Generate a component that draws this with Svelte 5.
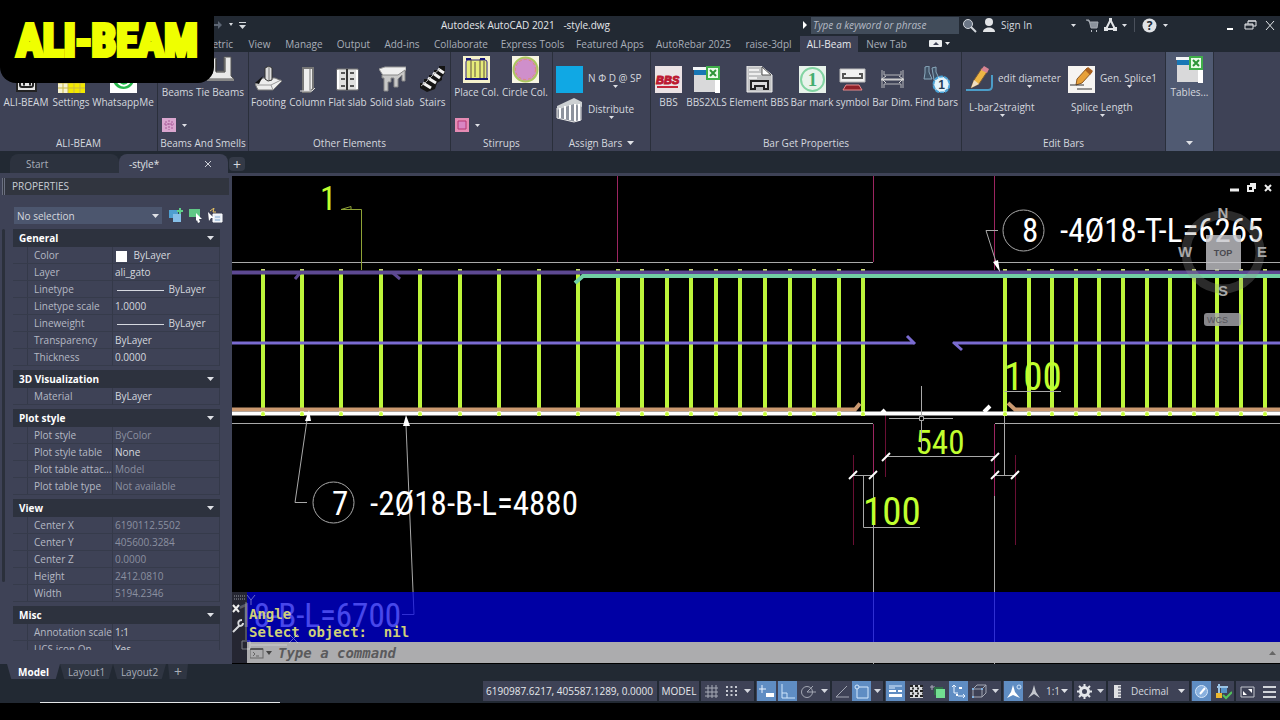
<script lang="ts">
    type Tool = { icon: string; label: string };

    const ribbonTabs = [
        'Parametric', 'View', 'Manage', 'Output', 'Add-ins', 'Collaborate', 'Express Tools',
        'Featured Apps', 'AutoRebar 2025', 'raise-3dpl', 'ALI-Beam', 'New Tab'
    ];
    let activeTab = $state('ALI-Beam');
    let command = $state('');
    let search = $state('');

    const aliTools: Tool[] = [
        { icon: 'section', label: 'ALI-BEAM' },
        { icon: 'sheet', label: 'Settings' },
        { icon: 'phone', label: 'WhatsappMe' }
    ];
    const beamTools: Tool[] = [
        { icon: 'tie', label: 'Beams' },
        { icon: 'tie', label: 'Tie Beams' }
    ];
    const elementTools: Tool[] = [
        { icon: 'footing', label: 'Footing' },
        { icon: 'column', label: 'Column' },
        { icon: 'flat', label: 'Flat slab' },
        { icon: 'solid', label: 'Solid slab' },
        { icon: 'stairs', label: 'Stairs' }
    ];
    const stirrupTools: Tool[] = [
        { icon: 'place', label: 'Place Col.' },
        { icon: 'circle', label: 'Circle Col.' }
    ];
    const barTools: Tool[] = [
        { icon: 'bbs', label: 'BBS' },
        { icon: 'xls', label: 'BBS2XLS' },
        { icon: 'element', label: 'Element BBS' },
        { icon: 'mark', label: 'Bar mark' },
        { icon: 'symbol', label: 'symbol' },
        { icon: 'dim', label: 'Bar Dim.' },
        { icon: 'find', label: 'Find bars' }
    ];

    const sections = [
        {
            title: 'General',
            rows: [
                { name: 'Color', value: 'ByLayer', swatch: true },
                { name: 'Layer', value: 'ali_gato' },
                { name: 'Linetype', value: 'ByLayer', line: true },
                { name: 'Linetype scale', value: '1.0000' },
                { name: 'Lineweight', value: 'ByLayer', line: true },
                { name: 'Transparency', value: 'ByLayer' },
                { name: 'Thickness', value: '0.0000' }
            ]
        },
        { title: '3D Visualization', rows: [{ name: 'Material', value: 'ByLayer' }] },
        {
            title: 'Plot style',
            rows: [
                { name: 'Plot style', value: 'ByColor', dim: true },
                { name: 'Plot style table', value: 'None' },
                { name: 'Plot table attac...', value: 'Model', dim: true },
                { name: 'Plot table type', value: 'Not available', dim: true }
            ]
        },
        {
            title: 'View',
            rows: [
                { name: 'Center X', value: '6190112.5502', dim: true },
                { name: 'Center Y', value: '405600.3284', dim: true },
                { name: 'Center Z', value: '0.0000', dim: true },
                { name: 'Height', value: '2412.0810', dim: true },
                { name: 'Width', value: '5194.2346', dim: true }
            ]
        },
        {
            title: 'Misc',
            rows: [
                { name: 'Annotation scale', value: '1:1' },
                { name: 'UCS icon On', value: 'Yes' }
            ]
        }
    ] as { title: string; rows: { name: string; value: string; swatch?: boolean; line?: boolean; dim?: boolean }[] }[];

    // stirrup positions along the beam
    const stirrups = [
        ...Array.from({ length: 10 }, (_, i) => Math.round(262.5 + i * 39.45)),
        ...Array.from({ length: 10 }, (_, i) => Math.round(642 + i * 24.6)),
        ...Array.from({ length: 12 }, (_, i) => Math.round(1005 + i * 23.6))
    ];
    const dimTicks = [[886, 457], [995, 457], [853, 475], [873, 475], [995, 475], [1015, 475]];

    const statusItems = [
        { icon: 'grid', w: 20 }, { icon: 'snap', w: 20 }, { icon: 'arrow', w: 15, end: true },
        { icon: 'infer', w: 21, on: true }, { icon: 'ortho', w: 21, on: true }, { icon: 'polar', w: 20 },
        { icon: 'arrow', w: 14, end: true }, { icon: 'iso', w: 19 }, { icon: 'osnap', w: 21, on: true },
        { icon: 'arrow', w: 13, end: true }, { icon: 'weight', w: 21, on: true }, { icon: 'checker', w: 20 },
        { icon: 'cycle', w: 22 }, { icon: 'ucs', w: 21, on: true }, { icon: 'box', w: 21 },
        { icon: 'arrow', w: 13, end: true }, { icon: 'anno', w: 21, on: true }, { icon: 'auto', w: 19 }
    ];

    const excel = '<path d="M0 1h27v3H0z" fill="#f4f6f8"/><path d="M1 4h15v5H1z" fill="#1877b5"/><path d="M1 9h21v17H1z" fill="#d9d9da"/><path d="M22 13h5v14h-5z" fill="#fff"/><rect x="14" y="1" width="12" height="12" fill="#eafbe9" stroke="#3fae49" stroke-width="2"/><path d="m17 4 6 6M23 4l-6 6" stroke="#2d9438" stroke-width="2"/>';
    const icons: Record<string, string> = {
        section: '<rect x="4" y="2" width="19" height="23" fill="#e6e6e6" stroke="#222" stroke-width="2"/><rect x="7" y="6" width="13" height="15" rx="2" fill="none" stroke="#222" stroke-width="2"/><path d="M10 18h2m4 0h2" stroke="#222" stroke-width="3"/>',
        sheet: '<path d="M0 0h27v27H0z" fill="#f7f3d2"/><path d="M10 0h17v27H10z" fill="#f2e800"/><path d="M0 17h27M0 22h27M5 0v27M10 0v27M16 0v27M22 0v27" stroke="#c9b94a"/>',
        phone: '<path d="M0 0h27v27H0z" fill="#fff"/><circle cx="13.500" cy="12" r="11" fill="#27b84c"/><path d="M7 15c4 6 9 6 13 1" stroke="#fff" stroke-width="2" fill="none"/>',
        tie: '<path d="M5 2h4v13h8V1h7v19l3 3H0l5-5z" fill="#e9e9e9" stroke="#555"/><path d="M9 3v13h9V2" stroke="#333" fill="none"/><path d="M0 24h27" stroke="#888" stroke-width="2"/>',
        footing: '<path d="m0 18 8-6h12l7 3-9 9H3z" fill="#ededed" stroke="#777"/><path d="M1 19h15l10-5M16 19l2 5" stroke="#999" fill="none"/><path d="m10 2 4-2 3 2v12l-4 1-3-2z" fill="#ddd" stroke="#333"/><path d="M14 1v13" stroke="#777"/><path d="m0 17 8-7-4 8z" fill="#111"/>',
        column: '<path d="M9 2h10v21l-3 3H9z" fill="#eee" stroke="#777" stroke-width="2"/><path d="M16 3v22" stroke="#777"/><path d="M6 25h12l3-3" stroke="#ddd" fill="none"/>',
        flat: '<path d="M3 3h21v21H3z" fill="#e0e0df" stroke="#777"/><path d="M13 3v21" stroke="#333" stroke-width="2"/><path d="M4 4v19M23 4v19" stroke="#fff" stroke-width="2"/><path d="M7 6h4v2H7zm9 0h4v2h-4zM7 12h4v2H7zm9 0h4v2h-4zM7 19h4v2H7zm9 0h4v2h-4z" fill="#555"/>',
        solid: '<path d="m0 3 6-2h21v3l-8 7H5z" fill="#eee" stroke="#999"/><path d="M3 9h16l7-5v11h-3V9l-4 4v8h-4v-9h-3v4H9v9H5V12H3z" fill="#c8c8c8" stroke="#888"/>',
        stairs: '<path d="M1 17h4v-4h5V9h5V4h5V0h6v7l-3 4v3l-5 3-2 6-8 3-7-4z" fill="#151515"/><path d="m4 17 8 5m-3-10 8 5M14 7l7 5M19 3l6 4" stroke="#f2f2f2" stroke-width="3"/><path d="m2 20 5-4 4-4 5-5 5-4" stroke="#aaa" fill="none"/>',
        place: '<path d="M0 0h27v27H0z" fill="#f5f2cc"/><rect x="3" y="4" width="21" height="19" rx="2" fill="#e6ec79" stroke="#2f2484"/><path d="M8 3v20M12 6v15M17 3v20M21 5v17" stroke="#5d4c45"/><path d="M3 3h5m9 0h5M2 23h23" stroke="#17177b" stroke-width="2"/>',
        circle: '<path d="M0 0h27v27H0z" fill="#f8f5e4"/><circle cx="13.500" cy="13.500" r="12" fill="#cf8fcb" stroke="#acc75f" stroke-width="2"/><circle cx="13.500" cy="13.500" r="10" fill="none" stroke="#e28b71" stroke-dasharray="3 2"/>',
        bluebox: '<path d="M0 0h27v27H0z" fill="#10a8e4"/>',
        distribute: '<path d="m1 11 17-8 7 3v17l-7 2-17-4z" fill="#8d939d" stroke="#e7e7e7"/><path d="m1 9 17-8 8 4v5L18 7 1 13z" fill="#ccd0d2"/><path d="M4 11v10M9 9v13m5-14v15m5-16v17m4-17v17" stroke="#fff" stroke-width="2"/>',
        bbs: '<path d="M0 0h27v27H0z" fill="#ebe3e5"/><text x="1" y="18" font-size="11" font-weight="800" font-style="italic" font-family="Liberation Sans,sans-serif" stroke="#bc1830" fill="#bc1830">BBS</text><path d="M2 21h21" stroke="#c2263a" stroke-width="2"/>',
        xls: excel,
        element: '<path d="M1 0h14l11 9v17H1z" fill="#c2c3c4" stroke="#ececec"/><path d="M3 4h10m-10 4h12m-12 4h8" stroke="#eee" stroke-width="2"/><path d="m16 1 9 8h-9z" fill="#fff" stroke="#555"/><path d="M5 15h17v8h-4v-3H9v3H5z" fill="#ddd" stroke="#222" stroke-width="2"/>',
        mark: '<path d="M0 0h27v27H0z" fill="#e8f3eb"/><circle cx="13.500" cy="13.500" r="11.500" fill="none" stroke="#82d4a2" stroke-width="2"/><text x="13.500" y="20" text-anchor="middle" font-size="19" font-weight="700" font-family="Liberation Serif,serif" fill="#44ae70">1</text>',
        symbol: '<path d="M1 3h25v13H1z" fill="#f1f1f1" stroke="#bbb"/><path d="M7 8H4v4h19V8h-3" fill="none" stroke="#555" stroke-width="2"/><path d="m7 19-3 5h19l-3-5z" fill="#8f2029" stroke="#e9898b"/>',
        dim: '<path d="M3 4v18M24 4v18M5 5v4h17V5M5 22v-4h17v4" stroke="#b5b6ba" fill="none"/><path d="M2 13.500h23" stroke="#ccc" stroke-width="2"/><path d="m7 10-4 3 4 4m13-7 4 3-4 4" stroke="#d6d6d6" fill="none"/>',
        find: '<path d="m2 1 4-1v6l3 7H1l1-6zM9 2l4-1v5l3 6-5 2z" fill="#405266" stroke="#8aa9bd"/><circle cx="18.500" cy="18.500" r="8" fill="#e5f4fa" stroke="#4aa3d7" stroke-width="2" stroke-dasharray="4 1"/><text x="18.500" y="23" text-anchor="middle" font-size="12" font-weight="700" font-family="Liberation Sans,sans-serif" fill="#273d55">1</text>',
        pencil: '<path d="M0 24h22q4 0 4-4V9" stroke="#4b9dc8" stroke-width="2" fill="none"/><path d="m8 14 8-12 5 4-8 12-8 4z" fill="#edb645" stroke="#7a5a34"/><path d="m15 4 3-4 5 3-2 4z" fill="#d78494"/><path d="m8 14 5 4-8 4z" fill="#f1dfc3"/>',
        splice: '<path d="M0 0h27v27H0z" fill="#f6f4f1"/><path d="m9 13 10-11 5 4-10 11-6 2z" fill="#e7a13a" stroke="#8b5a26"/><path d="m17 4 3-3 5 4-3 4z" fill="#a9601e"/><path d="M2 19h14m-7 4h15" stroke="#333"/>'
    };

    const glyphs: Record<string, string> = {
        arrow: '<path d="M5 6h7l-3.500 4z" fill="#d4d7de"/>',
        grid: '<path d="M5 2v13M9 2v13M13 2v13M2 5h13M2 9h13M2 13h13" stroke="#a7abb6"/>',
        snap: '<path d="M3 4h11M3 8h11M3 12h11" stroke="#c7cad2" stroke-width="2" stroke-dasharray="2 2.500"/>',
        infer: '<path d="M4 2v8M1 6h7" stroke="#eaf3ff"/><path d="M8 10h8v4H8z" fill="#fff"/>',
        ortho: '<path d="M3 1v14h13M3 10h5v5" stroke="#cfe5fb" fill="none"/>',
        polar: '<circle cx="7" cy="9" r="5.500" fill="none" stroke="#a2a6b2"/><path d="M7 9h9M7 9l6-6" stroke="#a2a6b2"/>',
        iso: '<path d="M14 3 3 14h13" fill="none" stroke="#a2a6b2"/>',
        osnap: '<path d="M4 4h11v11H4z" fill="none" stroke="#d6e9fd"/><circle cx="4" cy="4" r="2" fill="#5f8dc3" stroke="#d6e9fd"/>',
        weight: '<path d="M2 3h13M2 5h6" stroke="#dcecff"/><path d="M2 8h7m2 0h4" stroke="#fff" stroke-width="2"/><path d="M2 12.500h13" stroke="#fff" stroke-width="3"/>',
        checker: '<path d="M2 2h13v13H2z" fill="#d8d9dc"/><path d="M2 3h13M2 8h13M2 13h13" stroke="#222" stroke-width="2" stroke-dasharray="3 2"/><path d="M4 5.500h11M4 10.500h11" stroke="#333" stroke-width="2" stroke-dasharray="2 3"/>',
        cycle: '<path d="M3 2v5M1 4h5" stroke="#aab"/><path d="M5 4h9v8H5z" fill="#2f6e48"/><path d="M7 6h9v9H7z" fill="#72de91"/>',
        ucs: '<path d="M4 2v8h4M2 4l2-2 2 2M8 13h7m-2-2 2 2-2 2" stroke="#eaf4ff" fill="none"/><path d="M9 5h3M6 12h2" stroke="#fff" stroke-width="2"/>',
        box: '<path d="M2 6h9v8H2zM2 6l4-4h9l-4 4M15 2v8l-4 4" fill="none" stroke="#a2a6b2"/><path d="M1 5h2v2H1zM10 5h2v2h-2zM1 13h2v2H1z" fill="#7fb0df"/>',
        anno: '<path d="m8 2 2 7 5 6-7-3-6 3 4-6z" fill="#fff"/><circle cx="14" cy="4" r="2" fill="none" stroke="#cfe5fb"/>',
        auto: '<path d="m9 2 2 7 4 6-6-4-6 4 4-6z" fill="#c5c8cf"/>',
        gear: '<circle cx="8.500" cy="8.500" r="4" fill="none" stroke="#e3e5e9" stroke-width="3"/><path d="M8.500 1v3m0 9v3M1 8.500h3m9 0h3M3 3l2 2m7 7 2 2M14 3l-2 2m-7 7-2 2" stroke="#e3e5e9" stroke-width="2"/>',
        ruler: '<path d="M6 2h7v13H6z" fill="#e0e1e4"/><path d="M10 4h3M10 7h3M10 10h3M10 13h3" stroke="#3e4256"/>',
        accel: '<circle cx="8.500" cy="8.500" r="6" fill="#88b0de" stroke="#d6e6f8"/><path d="m7 11 5-6" stroke="#fff" stroke-width="2"/>',
        clean: '<path d="M2 4h11M4 1v12" stroke="#9bc2e3" stroke-width="2"/><path d="M6 5h6v5H6z" fill="#5792c8"/><path d="M1 10h6v5H1z" fill="#edb82f"/><path d="m8 12 3 3 6-6" stroke="#52c35b" stroke-width="2" fill="none"/>',
        full: '<path d="M2 4h13v10H2z" fill="none" stroke="#c1c4cc"/><path d="M9 6h4v4zM4 8v4h4z" fill="#fff"/>',
        menu: '<path d="M2 4h13M2 9h13M2 14h13" stroke="#d1d4da" stroke-width="2"/>'
    };
</script>

{#snippet art(name: string)}
    <svg class="art" viewBox="0 0 27 27" aria-hidden="true">{@html icons[name]}</svg>
{/snippet}

{#snippet glyph(name: string)}
    <svg class="glyph" viewBox="0 0 17 17" aria-hidden="true">{@html glyphs[name]}</svg>
{/snippet}

{#snippet caret()}
    <svg class="caret" viewBox="0 0 7 4" aria-hidden="true"><path d="M0 0h7L3.500 4z" fill="#dfe1e6" /></svg>
{/snippet}

{#snippet tools(list: Tool[])}
    {#each list as tool}
        <button class="tool">
            {@render art(tool.icon)}
            <span>{tool.label}</span>
        </button>
    {/each}
{/snippet}

<div class="screen">
    <div class="banner">ALI-BEAM</div>

    <header class="titlebar">
        <div class="quick">
            <svg viewBox="0 0 36 12" aria-hidden="true">
                <path d="M0 5h5V2l4 4-4 4V7H0z" fill="#5d6674" />
                <path d="M16 4h4l-2 3zM26 6h7l-3.500 4zM26 3h7v1h-7z" fill="#d6d9de" />
            </svg>
        </div>
        <h1>Autodesk AutoCAD 2021 <span>-style.dwg</span></h1>
        <div class="account">
            <svg class="play" viewBox="0 0 5 8" aria-hidden="true"><path d="M0 0v8l4-4z" fill="#fff" /></svg>
            <input aria-label="Search" placeholder="Type a keyword or phrase" bind:value={search} />
            <button class="w20" aria-label="Search">
                <svg class="glyph" viewBox="0 0 17 17"><circle cx="7" cy="7" r="4.500" fill="#6b7686" stroke="#d2d6dc" /><path d="m10 10 5 5" stroke="#d2d6dc" stroke-width="2" /></svg>
            </button>
            <button class="signin">
                <svg class="glyph" viewBox="0 0 17 17"><circle cx="9" cy="5" r="4" fill="#e2e4e7" /><path d="M3 15c0-6 12-6 12 0z" fill="#e2e4e7" /></svg>
                <span>Sign In</span>
            </button>
            <button class="w12" aria-label="Account">{@render caret()}</button>
            <button class="w24" aria-label="Store">
                <svg class="glyph" viewBox="0 0 17 17"><path d="M3 3h3l2 8h6l1-6H6" fill="#8b929c" stroke="#a8adb5" /><path d="M8 14h1m4 0h1" stroke="#b8bcc3" stroke-width="2" /></svg>
            </button>
            <button class="w15" aria-label="Apps">
                <svg class="glyph" viewBox="0 0 17 17"><path d="M8.500 3 4 12h9z" fill="none" stroke="#e2e4e7" stroke-width="2" /><path d="M7 1h3v4H7zM2 10h4v4H2zm9 0h4v4h-4z" fill="#e2e4e7" /></svg>
            </button>
            <button class="w12" aria-label="More apps">{@render caret()}</button>
            <i class="sep"></i>
            <button class="w20" aria-label="Help">
                <svg class="glyph" viewBox="0 0 17 17"><circle cx="8.500" cy="8.500" r="7" fill="#e0e2e6" /><text x="8.500" y="13" text-anchor="middle" font-size="12" font-weight="700" fill="#222933">?</text></svg>
            </button>
            <button class="w12" aria-label="Help menu">{@render caret()}</button>
            <div class="window">
                <button class="w20" aria-label="Minimize"><svg class="glyph" viewBox="0 0 17 17"><path d="M5 12h6" stroke="#fff" stroke-width="2" /></svg></button>
                <button class="w20" aria-label="Restore"><svg class="glyph" viewBox="0 0 17 17"><path d="M6 7V4h8v5h-3M3 7h8v5H3z" fill="none" stroke="#e4e6ea" /><path d="M6 4h8M3 8h8" stroke="#e4e6ea" /></svg></button>
                <button class="w20" aria-label="Close"><svg class="glyph" viewBox="0 0 17 17"><path d="m4 4 8 9m0-9-8 9" stroke="#e4e6ea" /></svg></button>
            </div>
        </div>
    </header>

    <nav class="tabs">
        {#each ribbonTabs as tab}
            <button class:active={tab === activeTab} onclick={() => (activeTab = tab)}>{tab}</button>
        {/each}
        <button class="pill" aria-label="Collapse ribbon">
            <svg viewBox="0 0 22 8"><rect width="13" height="7" rx="1" fill="#eceef0" /><path d="m4 5 3-3 3 3z" fill="#3e4256" /><path d="M16 2h5l-2.500 3z" fill="#eceef0" /></svg>
        </button>
    </nav>

    <section class="ribbon">
        <div class="group g-ali">
            <div class="items">{@render tools(aliTools)}</div>
            <p>ALI-BEAM</p>
        </div>
        <div class="group g-beams high">
            <div class="items">{@render tools(beamTools)}</div>
            <button class="mini" aria-label="Beam sections">
                <svg viewBox="0 0 14 14"><path d="M0 0h14v14H0z" fill="#d9a6cf" /><path d="M4 3v9M10 3v9M2 6h10M7 2v10" stroke="#a65b98" stroke-dasharray="2 1" /></svg>
                {@render caret()}
            </button>
            <p>Beams And Smells</p>
        </div>
        <div class="group g-other">
            <div class="items">{@render tools(elementTools)}</div>
            <p>Other Elements</p>
        </div>
        <div class="group g-stirrups high">
            <div class="items">{@render tools(stirrupTools)}</div>
            <button class="mini" aria-label="Stirrup shape">
                <svg viewBox="0 0 14 14"><path d="M0 0h14v14H0z" fill="#e58bb4" /><path d="M3 3h8v8H3z" fill="#d986c4" stroke="#b63573" /></svg>
                {@render caret()}
            </button>
            <p>Stirrups</p>
        </div>
        <div class="group g-assign">
            <div class="stack">
                <button class="wide">{@render art('bluebox')}<span class="drop">N Φ D @ SP{@render caret()}</span></button>
                <button class="wide">{@render art('distribute')}<span class="drop">Distribute{@render caret()}</span></button>
            </div>
            <p>Assign Bars {@render caret()}</p>
        </div>
        <div class="group g-bars">
            <div class="items">{@render tools(barTools)}</div>
            <p>Bar Get Properties</p>
        </div>
        <div class="group g-edit">
            <div class="pairs">
                <button class="wide">{@render art('pencil')}<span class="drop">edit diameter{@render caret()}</span></button>
                <button class="wide">{@render art('splice')}<span class="drop">Gen. Splice1{@render caret()}</span></button>
                <button class="wide"><span class="drop">L-bar2straight{@render caret()}</span></button>
                <button class="wide"><span class="drop">Splice Length{@render caret()}</span></button>
            </div>
            <p>Edit Bars</p>
        </div>
        <div class="group g-tables high">
            <div class="items"><button class="tool">{@render art('xls')}<span>Tables...</span></button></div>
            <p>{@render caret()}</p>
        </div>
    </section>

    <nav class="files">
        <button class="file">Start</button>
        <button class="file current"><span>-style*</span>
            <svg viewBox="0 0 8 8" aria-hidden="true"><path d="m1 1 6 6m0-6-6 6" stroke="#cfd2d9" /></svg>
        </button>
        <button class="plus" aria-label="New drawing">+</button>
    </nav>

    <main>
        <aside>
            <h2>PROPERTIES</h2>
            <div class="pick">
                <div class="select">
                    <select aria-label="Selection"><option>No selection</option></select>
                    {@render caret()}
                </div>
                <svg viewBox="0 0 56 15" aria-hidden="true">
                    <path d="M0 2h9v8H0z" fill="#4e9fd0" /><path d="M4 6h8v8H4z" fill="#86bfe8" /><path d="M11 0v6M8 3h6" stroke="#5fd08a" stroke-width="2" />
                    <path d="M20 1h11v8H20z" fill="#60c886" /><path d="m27 5 6 6h-3l1 3-2 1-1-3-1 1z" fill="#fff" />
                    <path d="M44 6h9v8h-9z" fill="#e6edf5" stroke="#fff" /><path d="M46 9h5M46 12h5" stroke="#7fa8d0" /><path d="m39 4 6 6h-3l-2 3z" fill="#fff" /><path d="m41 3 4-3-1 4h3" stroke="#e8c262" fill="none" />
                </svg>
            </div>
            <div class="palette">
                <i class="thumb"></i>
                <div class="lists">
                    {#each sections as section}
                        <table>
                            <colgroup><col class="names" /><col /></colgroup>
                            <thead>
                                <tr><th colspan="2"><span>{section.title}{@render caret()}</span></th></tr>
                            </thead>
                            <tbody>
                                {#each section.rows as row}
                                    <tr>
                                        <th scope="row">{row.name}</th>
                                        <td class:dim={row.dim}>
                                            {#if row.swatch}<i class="swatch"></i>{/if}
                                            {#if row.line}<i class="line"></i>{/if}
                                            {row.value}
                                        </td>
                                    </tr>
                                {/each}
                            </tbody>
                        </table>
                    {/each}
                </div>
            </div>
        </aside>

        <div class="drawing">
            <svg class="model" viewBox="232 176 1048 488" preserveAspectRatio="xMinYMin slice" role="img" aria-label="Beam reinforcement drawing">
                <!-- concrete outline and axes -->
                <g class="thin">
                    <path d="M232 262.500h641M995 262.500h285M232 423.500h641M995 423.500h285" />
                    <path d="M873.500 475v189M994.500 496v168" />
                </g>
                <g class="axis">
                    <path d="M617.500 176v86M873.500 176v86M994.500 176v94M873.500 424v51M994.500 424v72" />
                    <path class="faint" d="M853.500 455v90M885.500 415v62M1015.500 455v90" />
                </g>

                <!-- longitudinal bars and stirrups -->
                <path class="lime-thin" d="M361.500 270v-60.500H341l10-3v3" />
                {#each stirrups as x}
                    <path class="stirrup" d="M{x} 269V416" />
                {/each}
                <path d="M232 272.500H1280" stroke="#5d4992" stroke-width="4" />
                <path d="M295 279l5-6M393 273l7 6" stroke="#5d4992" stroke-width="3" />
                <path d="M575 283l8-7H1280" fill="none" stroke="#70cfa3" stroke-width="4" />
                <path d="M232 343H914M907 336l8 8M953 342l9 8M955 343H1280" stroke="#7a6bd0" stroke-width="3" fill="none" />
                <path d="M232 409.500H855l5-6M1008 403l7 6.500H1280" fill="none" stroke="#cb9970" stroke-width="4" />
                <path d="M232 413.500H1280" stroke="#fff" stroke-width="4" />
                <path d="M984 412l6-6M882 413l3-3" stroke="#fff" stroke-width="4" />
                {#each stirrups as x}
                    <circle cx={x} cy="414" r="2" fill="#c8ff3a" />
                    <path d="M{x - 1} 269.500h3" stroke="#cfd08a" />
                {/each}

                <!-- dimensions -->
                <g class="thin">
                    <path d="M886 456.500H995M853 475.500H873M995 475.500H1015" />
                    <path d="M863.500 475V527.500H920M1004.500 416V475M1004.500 391.500H1061" />
                </g>
                {#each dimTicks as [x, y]}
                    <path d="M{x - 4} {y + 4}l8-8" stroke="#fff" stroke-width="2" />
                {/each}
                <g class="lime">
                    <text x="320" y="210" font-size="33">1</text>
                    <text x="940" y="454" font-size="33" text-anchor="middle">540</text>
                    <text x="863" y="525" font-size="39">100</text>
                    <text x="1004" y="390" font-size="39">100</text>
                </g>

                <!-- bar tags -->
                <g class="thin">
                    <circle cx="1023.500" cy="230.500" r="20.500" />
                    <circle cx="333.500" cy="502.500" r="20.500" />
                    <path d="M998 230.500H986L996 262M307 502.500H295L307 420M406 425L414 614.500H402" />
                </g>
                <g fill="#fff">
                    <path d="M1000 272l-7-10 5-2zM309 410l-4 11h6zM406 415l-3 11h7z" />
                    <text x="1022" y="242" font-size="33">8</text>
                    <text x="1060" y="242" font-size="33">-4Ø18-T-L=6265</text>
                    <text x="332" y="515" font-size="33">7</text>
                    <text x="370" y="515" font-size="33">-2Ø18-B-L=4880</text>
                    <text x="401" y="627" font-size="33" text-anchor="end">18-B-L=6700</text>
                </g>

                <!-- crosshair -->
                <path class="thin" d="M921.500 386V416M921.500 421V450M889 418.500H919M924 418.500H953M919.500 416.500h4v4h-4z" />

                <!-- view cube -->
                <circle cx="1223" cy="252" r="37" fill="none" stroke="#909090" stroke-opacity=".3" stroke-width="9" />
                <path d="M1206 235h35v35h-35z" fill="#c6c6ca" fill-opacity=".8" />
                <g class="compass">
                    <text x="1223" y="218">N</text><text x="1223" y="296">S</text>
                    <text x="1185" y="257">W</text><text x="1262" y="257">E</text>
                    <text class="top" x="1223" y="256">TOP</text>
                </g>
                <rect x="1204" y="313" width="37" height="13" rx="3" fill="#a9a9ae" fill-opacity=".8" />
                <text x="1207" y="323" class="wcs">WCS</text>
                <path d="M1230 190h9" stroke="#eee" stroke-width="3" />
                <path d="M1248 186h5v5h-5zM1250 184h5v5" fill="none" stroke="#eee" stroke-width="2" />
                <path d="M1265 185l6 6M1271 185l-6 6" stroke="#eee" stroke-width="2" />
            </svg>

            <div class="console">
                <div class="grip">
                    <svg viewBox="0 0 15 71" aria-hidden="true">
                        <path d="M2 4h11M2 7h11" stroke="#999ca5" stroke-width="1" stroke-dasharray="1 1" />
                        <path d="m1 13 6 7m0-7-6 7" stroke="#eee" stroke-width="2" />
                        <path d="M1 40l6-6c-2-4 0-6 3-6M7 34c2 0 4 0 4-3" stroke="#d6d8dc" stroke-width="2" fill="none" />
                    </svg>
                </div>
                <div class="log">
                    <div>Angle</div>
                    <div>Select object:&nbsp; nil</div>
                </div>
                <label class="prompt">
                    <svg viewBox="0 0 22 12" aria-hidden="true"><rect x="0" y="2" width="13" height="9" fill="none" stroke="#666" /><path d="M0 2h13" stroke="#555" stroke-width="2" /><path d="m3 5 2 2-2 2M6 9h3" stroke="#666" fill="none" /><path d="M16 4h6l-3 4z" fill="#444" /></svg>
                    <input aria-label="Command" placeholder="Type a command" bind:value={command} />
                    <svg class="history" viewBox="0 0 7 4" aria-hidden="true"><path d="M0 4h7L3.500 0z" fill="#666" /></svg>
                </label>
            </div>
            <svg class="origin" viewBox="0 0 66 62" aria-hidden="true">
                <path d="M14 8v38M19 51h36M10 47h8v8h-8zM15 1l4 5 4-5M19 6v5M57 40l9 9m0-9-9 9" fill="none" stroke="#fff" />
            </svg>
        </div>
    </main>

    <footer>
        <nav class="layouts">
            <button class="layout current">Model</button>
            <button class="layout">Layout1</button>
            <button class="layout">Layout2</button>
            <button class="layout add" aria-label="New layout">+</button>
        </nav>
        <div class="status">
            <span class="coords">6190987.6217, 405587.1289, 0.0000</span>
            <button class="space">MODEL</button>
            {#each statusItems as item}
                <button class="toggle" class:on={item.on} class:end={item.end} style="width: {item.w}px" aria-label={item.icon}>
                    {@render glyph(item.icon)}
                </button>
            {/each}
            <div class="select scale">
                <select aria-label="Annotation scale"><option>1:1</option></select>{@render caret()}
            </div>
            <button class="toggle w20" aria-label="Workspace">{@render glyph('gear')}</button>
            <button class="toggle w14 end" aria-label="Workspace menu">{@render glyph('arrow')}</button>
            <div class="select units">
                {@render glyph('ruler')}
                <select aria-label="Units"><option>Decimal</option></select>{@render caret()}
            </div>
            <button class="toggle on w21" aria-label="Graphics performance">{@render glyph('accel')}</button>
            <button class="toggle w24 end" aria-label="Isolate objects">{@render glyph('clean')}</button>
            <button class="toggle w22" aria-label="Clean screen">{@render glyph('full')}</button>
            <button class="toggle w22" aria-label="Customization">{@render glyph('menu')}</button>
        </div>
    </footer>
</div>

<style>
    :global(body) {
        background: #000;
    }
    .screen {
        position: relative;
        box-sizing: border-box;
        height: 100vh;
        padding: 16px 0 17px;
        display: flex;
        flex-direction: column;
        font: 10px/14px 'Open Sans', 'Noto Sans', sans-serif;
        color: #d5d8df;
        overflow: hidden;
    }
    button,
    select,
    input {
        font: inherit;
        color: inherit;
        background: none;
        border: 0;
        padding: 0;
        margin: 0;
        min-width: 0;
        white-space: nowrap;
    }
    h1,
    h2,
    p {
        margin: 0;
        font-size: 10px;
        font-weight: 400;
    }
    svg {
        display: block;
        flex: none;
    }
    .art {
        width: 27px;
        height: 27px;
    }
    .glyph {
        width: 17px;
        height: 17px;
    }
    .caret {
        width: 7px;
        height: 4px;
    }
    .w12 { width: 12px; }
    .w14 { width: 14px; }
    .w15 { width: 15px; }
    .w20 { width: 20px; }
    .w21 { width: 21px; }
    .w22 { width: 22px; }
    .w24 { width: 24px; }

    .banner {
        position: absolute;
        z-index: 2;
        top: 16px;
        left: 0;
        width: 214px;
        height: 67px;
        border-radius: 0 0 16px 16px;
        background: #000;
        color: #efff00;
        font: 700 44px/50px 'Roboto Condensed', 'Liberation Sans', sans-serif;
        text-align: center;
        white-space: nowrap;
        -webkit-text-stroke: 4px #efff00;
    }

    .titlebar {
        flex: none;
        height: 20px;
        display: grid;
        grid-template-columns: 217px 1fr 480px;
        background: #222933;
    }
    .quick {
        grid-column: 1;
        justify-self: end;
        width: 4px;
    }
    .quick svg {
        width: 36px;
        height: 12px;
        margin-top: 3px;
    }
    h1 {
        padding-left: 34px;
        text-align: center;
        line-height: 19px;
        color: #e4e6ea;
    }
    h1 span {
        margin-left: 6px;
    }
    .account {
        display: flex;
        align-items: center;
        height: 18px;
    }
    .account button {
        display: flex;
        justify-content: center;
        align-items: center;
    }
    .play {
        width: 5px;
        height: 8px;
        margin: 0 3px;
    }
    .account input {
        width: 148px;
        height: 17px;
        box-sizing: border-box;
        padding-left: 2px;
        background: #414c5a;
        font-style: italic;
    }
    .account input::placeholder {
        color: #b4bac4;
        opacity: 1;
    }
    .account .signin {
        width: 88px;
        justify-content: flex-start;
        gap: 4px;
        padding-left: 1px;
    }
    .sep {
        width: 1px;
        height: 14px;
        margin: 0 4px;
        background: #4a505b;
    }
    .window {
        display: flex;
        margin-left: auto;
    }

    .tabs {
        flex: none;
        display: grid;
        grid-template-columns: 241px 37px 52px 47px 50px 68px 75px 80px 87px 63px 58px 57px 50px;
        height: 16px;
        background: #222933;
        color: #a9aeb9;
    }
    .tabs button {
        display: flex;
        justify-content: center;
        align-items: center;
    }
    .tabs button:first-child {
        justify-content: flex-end;
        padding-right: 8px;
    }
    .tabs .active {
        background: #3e4256;
        color: #e8eaee;
    }
    .pill svg {
        width: 22px;
        height: 8px;
    }

    .ribbon {
        flex: none;
        display: flex;
        height: 99px;
        background: #3e4256;
    }
    .group {
        box-sizing: border-box;
        flex: none;
        display: flex;
        flex-direction: column;
        padding: 14px 0 1px;
        border-right: 1px solid #2a2f3b;
    }
    .group.high {
        padding-top: 4px;
    }
    .items {
        display: grid;
    }
    .tool {
        display: flex;
        flex-direction: column;
        align-items: center;
        gap: 2px;
    }
    .group p {
        display: flex;
        justify-content: center;
        align-items: center;
        gap: 5px;
        height: 14px;
        margin-top: auto;
    }
    .g-ali { width: 158px; }
    .g-ali .items { grid-template-columns: 48px 42px 62px; padding-left: 2px; }
    .g-beams { width: 91px; }
    .g-beams .items { grid-template-columns: 35px 50px; padding-left: 2px; }
    .g-other { width: 202px; }
    .g-other .items { grid-template-columns: 39px 39px 41px 48px 33px; }
    .g-stirrups { width: 102px; }
    .g-stirrups .items { grid-template-columns: 49px 48px; padding-left: 1px; }
    .g-assign { width: 98px; }
    .g-bars { width: 311px; }
    .g-bars .items { grid-template-columns: 35px 41px 64px 42px 39px 41px 47px; }
    .g-edit { width: 204px; }
    .g-tables { width: 48px; background: #505a72; }
    .mini {
        display: flex;
        align-items: center;
        gap: 6px;
        margin: 19px 0 0 4px;
    }
    .mini svg:first-child {
        width: 14px;
        height: 14px;
    }
    .mini .caret,
    .account .caret,
    .drop .caret {
        width: 5px;
        height: 3px;
    }
    .stack {
        display: flex;
        flex-direction: column;
        gap: 4px;
        padding-left: 3px;
    }
    .wide {
        display: flex;
        align-items: center;
        gap: 5px;
    }
    .drop {
        position: relative;
        bottom: 2px;
    }
    .drop .caret {
        position: absolute;
        left: 50%;
        top: 14px;
        margin-left: -2px;
    }
    .pairs {
        display: grid;
        grid-template-columns: 102px 100px;
        row-gap: 9px;
        padding-left: 4px;
    }
    .pairs .wide:nth-child(n + 3) {
        padding-left: 3px;
    }

    .files {
        flex: none;
        display: flex;
        align-items: flex-end;
        height: 22px;
        padding-left: 10px;
        background: #222933;
        border-bottom: 3px solid #3e4256;
    }
    .file {
        width: 109px;
        height: 19px;
        padding: 0 16px;
        border-radius: 8px 8px 0 0;
        background: #2c323e;
        color: #a9aeb9;
        display: flex;
        justify-content: space-between;
        align-items: center;
    }
    .file.current {
        background: #3e4256;
        color: #e0e2e7;
        padding: 0 16px 0 10px;
    }
    .file svg {
        width: 8px;
        height: 8px;
    }
    .plus {
        width: 16px;
        height: 14px;
        margin: 0 0 2px 1px;
        border-radius: 4px;
        background: #343a47;
        font-size: 14px;
        line-height: 13px;
    }

    main {
        flex: 1;
        min-height: 0;
        display: flex;
    }
    aside {
        flex: none;
        box-sizing: border-box;
        width: 232px;
        display: flex;
        flex-direction: column;
        padding: 2px 2px 14px;
        background: #3e4256;
    }
    h2 {
        padding-left: 7px;
        margin-right: 1px;
        border-left: 3px double #6b7080;
        background: #31353f;
        line-height: 17px;
        color: #c8ccd4;
    }
    .pick {
        display: flex;
        align-items: center;
        gap: 7px;
        margin: 12px 0 5px 12px;
    }
    .pick > svg {
        width: 56px;
        height: 15px;
    }
    .select {
        display: flex;
        align-items: center;
    }
    .select select {
        appearance: none;
        flex: 1;
        outline: 0;
    }
    .pick .select {
        width: 142px;
        height: 17px;
        padding: 0 3px;
        background: #4c566e;
    }
    .palette {
        flex: 1;
        min-height: 0;
        display: flex;
        gap: 8px;
    }
    .thumb {
        width: 3px;
        height: 353px;
        border-radius: 2px;
        background: #2b303b;
    }
    .lists {
        width: 207px;
        overflow: hidden;
    }
    table {
        width: 100%;
        margin-bottom: 4px;
        border-spacing: 0;
        table-layout: fixed;
    }
    .names {
        width: 99px;
    }
    th,
    td {
        padding: 0;
        text-align: left;
        font-weight: 400;
        white-space: nowrap;
        height: 16px;
        line-height: 16px;
    }
    thead th {
        height: 18px;
        padding: 0 6px;
        background: #2d323e;
        color: #fff;
        font-weight: 700;
    }
    thead span {
        display: flex;
        justify-content: space-between;
        align-items: center;
    }
    tbody th {
        padding-left: 21px;
        color: #b5b9c4;
        background: linear-gradient(90deg, transparent 14px, #343949 14px, #343949 15px, transparent 15px);
    }
    tbody th,
    tbody td {
        border-bottom: 1px solid #363b4b;
    }
    tbody td {
        border-left: 1px solid #343949;
        border-right: 1px solid #343949;
        padding-left: 2px;
    }
    .dim {
        color: #8b90a0;
    }
    .swatch {
        display: inline-block;
        width: 11px;
        height: 11px;
        margin: 0 4px 0 1px;
        vertical-align: middle;
        background: #fff;
    }
    .line {
        display: inline-block;
        width: 47px;
        height: 1px;
        margin: 0 2px;
        vertical-align: middle;
        background: #d5d8df;
    }

    .drawing {
        position: relative;
        flex: 1;
        min-width: 0;
        overflow: hidden;
        background: #000;
    }
    .model {
        width: 100%;
        height: 100%;
        font-family: 'Roboto Condensed', 'Liberation Sans', sans-serif;
    }
    .thin {
        fill: none;
        stroke: #a9a9a9;
    }
    .axis {
        fill: none;
        stroke: #9c2560;
    }
    .faint {
        stroke: #6a0f34;
    }
    .stirrup {
        stroke: #bdf53a;
        stroke-width: 4;
    }
    .lime-thin {
        fill: none;
        stroke: #8fa336;
    }
    .lime {
        fill: #c0ff2e;
    }
    .compass {
        fill: #a9a9a9;
        font: 700 15px 'Liberation Sans', sans-serif;
        text-anchor: middle;
    }
    .compass .top {
        font-size: 9px;
        fill: #4a4a50;
    }
    .wcs {
        font: 9px 'Liberation Sans', sans-serif;
        fill: #56565c;
    }
    .console {
        position: absolute;
        left: 0;
        right: 0;
        bottom: 1px;
        display: grid;
        grid-template-columns: 15px 1fr;
        grid-template-rows: 50px 21px;
        font: 700 14px/18px 'DejaVu Sans Mono', monospace;
    }
    .grip {
        grid-row: 1 / 3;
        background: rgba(46, 48, 62, 0.8);
    }
    .grip svg {
        width: 15px;
        height: 71px;
    }
    .log {
        padding: 13px 2px 0;
        background: rgba(0, 0, 227, 0.72);
        color: #cfcf7a;
    }
    .prompt {
        display: flex;
        align-items: center;
        gap: 6px;
        padding: 0 4px 0 3px;
        background: #acacae;
    }
    .prompt svg {
        width: 22px;
        height: 12px;
    }
    .prompt .history {
        width: 7px;
        height: 4px;
    }
    .prompt input {
        flex: 1;
        font-style: italic;
    }
    .prompt input::placeholder {
        color: #5a5a5c;
        opacity: 1;
    }
    .origin {
        position: absolute;
        left: 0;
        bottom: 8px;
        width: 66px;
        height: 62px;
        opacity: 0.4;
        pointer-events: none;
    }

    footer {
        flex: none;
        display: flex;
        justify-content: space-between;
        height: 39px;
        background: linear-gradient(90deg, transparent 40px, #e4e6e8 40px, #e4e6e8 280px, transparent 280px) bottom / 100% 1px no-repeat #222933;
    }
    .layouts {
        display: flex;
        align-items: flex-start;
        padding-left: 7px;
    }
    .layout {
        width: 53px;
        height: 15px;
        background: #2f3542;
        color: #a9aeb9;
        clip-path: polygon(0 0, 100% 0, 92% 100%, 8% 100%);
    }
    .layout.current {
        background: #3e4256;
        color: #fff;
        font-weight: 700;
    }
    .layout.add {
        width: 20px;
        margin-left: 2px;
        font-size: 14px;
        line-height: 13px;
    }
    .status {
        align-self: flex-end;
        display: flex;
        height: 20px;
        margin-bottom: 2px;
    }
    .status > * {
        box-sizing: border-box;
        flex: none;
        background: #3e4256;
    }
    .coords {
        width: 176px;
        padding-right: 4px;
        border-right: 2px solid #222933;
        text-align: right;
        line-height: 20px;
        color: #e6e8ec;
    }
    .space {
        width: 42px;
        border-right: 2px solid #222933;
        color: #e6e8ec;
    }
    .toggle {
        display: flex;
        justify-content: center;
        align-items: center;
    }
    .status .toggle.on {
        background: #5f8dc3;
        border: solid #3e4256;
        border-width: 0 1px;
    }
    .toggle.end {
        border-right: 2px solid #222933;
    }
    .scale {
        width: 31px;
        padding: 0 4px 0 3px;
        border-right: 2px solid #222933;
    }
    .units {
        width: 83px;
        gap: 6px;
        padding-right: 4px;
        border-right: 2px solid #222933;
    }
</style>
